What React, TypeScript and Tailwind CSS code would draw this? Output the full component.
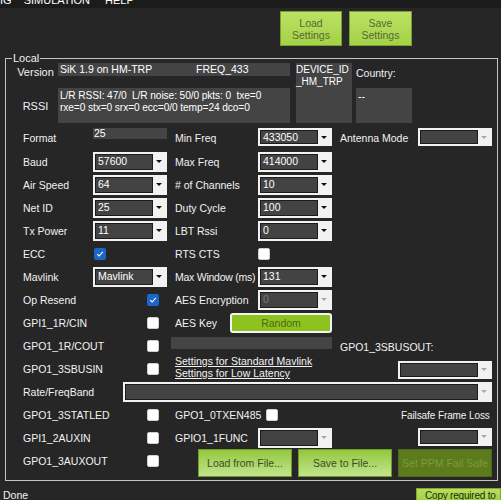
import React from 'react'

type ComboProps = {
  value?: string
  className?: string
  disabled?: boolean
}

function Combo({ value = '', className = '', disabled = false }: ComboProps) {
  return (
    <div className={`flex bg-[#f2f2f2] p-[2px] ${className}`}>
      <div
        className={`flex flex-1 items-center overflow-hidden border border-[#1c1c1c] bg-[#434343] pl-[2px] leading-none ${
          disabled ? 'text-[#777]' : 'text-white'
        }`}
      >
        {value}
      </div>
      <div className="flex w-[12px] items-center justify-center">
        <div
          className={`h-0 w-0 border-x-[3px] border-t-[3px] border-x-transparent ${
            disabled ? 'border-t-[#a8a8a8]' : 'border-t-[#111]'
          }`}
        />
      </div>
    </div>
  )
}

function Check({ on = false }: { on?: boolean }) {
  if (on) {
    return (
      <div className="flex h-[12px] w-[12px] items-center justify-center rounded-[2px] bg-[#1b67c9]">
        <svg width="8" height="8" viewBox="0 0 8 8">
          <path d="M1.2 4.2 3.1 6 6.8 1.9" fill="none" stroke="#fff" strokeWidth="1.1" />
        </svg>
      </div>
    )
  }
  return <div className="h-[12px] w-[12px] rounded-[2px] border border-[#cfcfcf] bg-white" />
}

// the GPIO checkboxes sit in the first control column, further right
function CheckCell({ on = false }: { on?: boolean }) {
  return (
    <div className="w-[82px] pl-[54px]">
      <Check on={on} />
    </div>
  )
}

const fileBtn =
  'flex h-[28px] w-[94px] items-center justify-center border border-[#6f9a26] bg-linear-to-b from-[#93c83a] to-[#c3e48c] text-[#3d4d24]'

export default function App() {
  return (
    <div className="h-[500px] w-[501px] overflow-hidden bg-[#262626] font-['Liberation_Sans',Arial,sans-serif] text-[10.5px] leading-[12px] text-[#f2f2f2]">
      {/* menu strip, cut off at the top */}
      <div className="h-[8px] overflow-hidden bg-[#1b1b1b]">
        <div className="-mt-[6px] flex gap-[12px] text-[11px] text-white">
          <span>IG</span>
          <span>SIMULATION</span>
          <span className="ml-[3px]">HELP</span>
        </div>
      </div>

      <div className="flex h-[50px] gap-[7px] pl-[280px] pt-[3px]">
        <button className="h-[35px] w-[62px] border border-[#789f33] bg-linear-to-b from-[#bde163] to-[#a3d246] leading-[12px] text-[#56673a]">
          Load
          <br />
          Settings
        </button>
        <button className="h-[35px] w-[63px] border border-[#789f33] bg-linear-to-b from-[#bde163] to-[#a3d246] leading-[12px] text-[#56673a]">
          Save
          <br />
          Settings
        </button>
      </div>

      {/* Local group */}
      <div className="relative ml-[5px] h-[423px] w-[493px] border border-[#c4c4c4] pt-[4px]">
        <div className="absolute -top-[7px] left-[6px] bg-[#262626] px-[1px] text-[11px]">Local</div>

        <div className="flex">
          <div className="w-[284px]">
            <div className="flex h-[25px]">
              <div className="ml-[7px] w-[45px] pt-[3px] text-center text-[11px]">Version</div>
              <div className="flex h-[13px] w-[232px] bg-[#444] pl-[2px] leading-[13px] text-white">
                <span className="w-[136px]">SiK 1.9 on HM-TRP</span>
                <span>FREQ_433</span>
              </div>
            </div>
            <div className="flex">
              <div className="ml-[7px] w-[45px] pt-[12px] text-center text-[11px]">RSSI</div>
              <div className="h-[35px] w-[232px] bg-[#444] pl-[2px] pt-[2px] text-[10.2px] tracking-[-0.1px] text-white">
                <div className="whitespace-pre">L/R RSSI: 47/0  L/R noise: 50/0 pkts: 0  txe=0</div>
                <div className="whitespace-pre">rxe=0 stx=0 srx=0 ecc=0/0 temp=24 dco=0</div>
              </div>
            </div>
          </div>
          <div className="ml-[6px] h-[60px] w-[56px] bg-[#444] pt-[1px] text-[10px] leading-[12px] text-white">
            DEVICE_ID
            <br />
            _HM_TRP
          </div>
          <div className="ml-[4px] w-[56px]">
            <div className="h-[25px] pt-[4px]">Country:</div>
            <div className="h-[35px] bg-[#444] pl-[2px] pt-[2px] text-white">--</div>
          </div>
        </div>

        <div className="mt-[4px] pl-[17px]">
          {/* Format */}
          <div className="flex h-[23px]">
            <div className="w-[70px] pt-[5px]">Format</div>
            <div className="w-[82px] pt-[1px]">
              <div className="h-[11px] w-[74px] bg-[#444] pl-[1px] leading-[11px] text-white">25</div>
            </div>
            <div className="w-[83px] pt-[5px]">Min Freq</div>
            <div className="w-[82px] pt-[1px]">
              <Combo value="433050" className="h-[18px] w-[74px]" />
            </div>
            <div className="w-[78px] pt-[5px]">Antenna Mode</div>
            <div className="pt-[1px]">
              <Combo disabled className="h-[18px] w-[74px]" />
            </div>
          </div>

          {[
            ['Baud', '57600', 'Max Freq', '414000'],
            ['Air Speed', '64', '# of Channels', '10'],
            ['Net ID', '25', 'Duty Cycle', '100'],
            ['Tx Power', '11', 'LBT Rssi', '0'],
          ].map(([a, av, b, bv]) => (
            <div key={a} className="flex h-[23px] items-center">
              <div className="w-[70px]">{a}</div>
              <div className="w-[82px]">
                <Combo value={av} className="h-[20px] w-[74px]" />
              </div>
              <div className="w-[83px]">{b}</div>
              <Combo value={bv} className="h-[20px] w-[74px]" />
            </div>
          ))}

          {/* ECC */}
          <div className="flex h-[23px] items-center">
            <div className="w-[70px]">ECC</div>
            <div className="w-[82px] pl-[1px]">
              <Check on />
            </div>
            <div className="w-[83px]">RTS CTS</div>
            <Check />
          </div>

          {/* Mavlink */}
          <div className="flex h-[23px] items-center">
            <div className="w-[70px]">Mavlink</div>
            <div className="w-[82px]">
              <Combo value="Mavlink" className="h-[20px] w-[74px]" />
            </div>
            <div className="w-[83px] whitespace-nowrap tracking-[-0.25px]">Max Window (ms)</div>
            <Combo value="131" className="relative h-[20px] w-[74px]" />
          </div>

          {/* Op Resend */}
          <div className="flex h-[23px] items-center">
            <div className="w-[70px]">Op Resend</div>
            <CheckCell on />
            <div className="w-[83px]">AES Encryption</div>
            <Combo value="0" disabled className="h-[20px] w-[74px] bg-[#8f8f8f]" />
          </div>

          {/* GPI1_1R/CIN */}
          <div className="flex h-[23px] items-center">
            <div className="w-[70px]">GPI1_1R/CIN</div>
            <CheckCell />
            <div className="w-[55px]">AES Key</div>
            <div className="flex h-[20px] w-[102px] items-center justify-center rounded-[3px] border-2 border-[#f4f4f4] bg-[#8dc21f] text-[#4d6a12]">
              Random
            </div>
          </div>

          {/* GPO1_1R/COUT */}
          <div className="flex h-[23px] items-center">
            <div className="w-[70px]">GPO1_1R/COUT</div>
            <div className="w-[78px] pl-[54px]">
              <Check />
            </div>
            <div className="-mt-[6px] h-[12px] w-[161px] bg-[#444]" />
            <div className="ml-[8px] pt-[3px]">GPO1_3SBUSOUT:</div>
          </div>

          {/* GPO1_3SBUSIN */}
          <div className="flex h-[23px] items-center">
            <div className="w-[70px]">GPO1_3SBUSIN</div>
            <CheckCell />
            <div className="-mt-[3px] w-[223px] leading-[12px] underline">
              <div>Settings for Standard Mavlink</div>
              <div>Settings for Low Latency</div>
            </div>
            <Combo disabled className="mt-[2px] h-[18px] w-[94px]" />
          </div>

          {/* Rate/FreqBand */}
          <div className="flex h-[23px] items-center">
            <div className="w-[100px]">Rate/FreqBand</div>
            <Combo disabled className="h-[20px] w-[369px]" />
          </div>

          {/* GPO1_3STATLED */}
          <div className="flex h-[23px] items-center">
            <div className="w-[70px]">GPO1_3STATLED</div>
            <CheckCell />
            <div className="w-[91px]">GPO1_0TXEN485</div>
            <Check />
            <div className="ml-[123px] pt-[3px] whitespace-nowrap text-[10px] tracking-[-0.1px]">Failsafe Frame Loss</div>
          </div>

          {/* GPI1_2AUXIN */}
          <div className="flex h-[23px] items-center">
            <div className="w-[70px]">GPI1_2AUXIN</div>
            <CheckCell />
            <div className="w-[83px]">GPIO1_1FUNC</div>
            <div className="w-[160px]">
              <Combo disabled className="h-[20px] w-[74px]" />
            </div>
            <Combo disabled className="-mt-[2px] h-[18px] w-[74px]" />
          </div>

          {/* GPO1_3AUXOUT */}
          <div className="flex h-[23px] items-center">
            <div className="w-[70px]">GPO1_3AUXOUT</div>
            <CheckCell />
            <div className="ml-[23px] mt-[5px] flex gap-[6px]">
              <div className={fileBtn}>Load from File...</div>
              <div className={fileBtn}>Save to File...</div>
              <div className="flex h-[28px] w-[94px] items-center justify-center border border-[#4e6a18] bg-[#5b7b1d] text-[#7d9c3a]">
                Set PPM Fail Safe
              </div>
            </div>
          </div>
        </div>
      </div>

      {/* status bar */}
      <div className="flex h-[19px] justify-between">
        <div className="pl-[3px] pt-[8px]">Done</div>
        <div className="mt-[7px] h-[14px] w-[85px] overflow-hidden border border-[#7ea83a] bg-linear-to-b from-[#b8de5c] to-[#a0d043] pl-[8px] pt-[1px] whitespace-nowrap text-[10px] tracking-[-0.2px] text-[#1f2b10]">
          Copy required to
        </div>
      </div>
    </div>
  )
}
